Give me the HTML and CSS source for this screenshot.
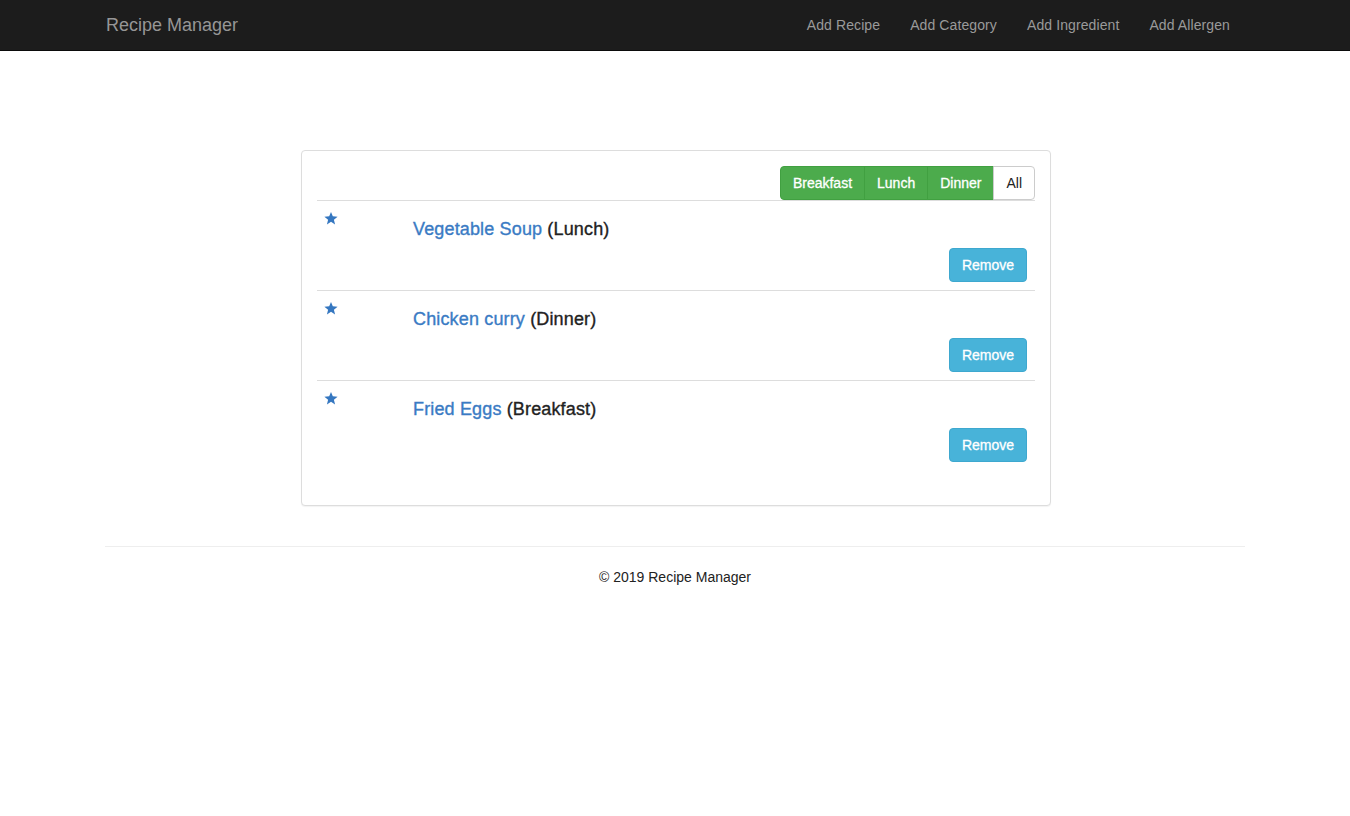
FILE: index.html
```html
<!DOCTYPE html>
<html lang="en">
<head>
<meta charset="utf-8">
<title>Recipe Manager</title>
<link rel="stylesheet" href="styles.css">
</head>
<body>
<nav class="navbar">
  <div class="container nav-inner">
    <a class="brand" href="#">Recipe Manager</a>
    <ul class="nav-links">
      <li><a href="#">Add Recipe</a></li>
      <li><a href="#">Add Category</a></li>
      <li><a href="#">Add Ingredient</a></li>
      <li><a href="#">Add Allergen</a></li>
    </ul>
  </div>
</nav>

<main class="main">
  <div class="panel">
    <div class="panel-body">
      <div class="filter-bar">
        <div class="btn-group">
          <button class="btn btn-success">Breakfast</button>
          <button class="btn btn-success">Lunch</button>
          <button class="btn btn-success">Dinner</button>
          <button class="btn btn-default">All</button>
        </div>
      </div>
      <ul class="recipe-list">
        <li class="recipe">
          <div class="star-col">
            <svg class="star" viewBox="0 0 24 24" width="14" height="14"><path d="M12 1.5l3.1 7.6 8.2.6-6.3 5.3 2 8-7-4.4-7 4.4 2-8L.7 9.7l8.2-.6z" fill="currentColor"/></svg>
          </div>
          <div class="recipe-body">
            <h4 class="recipe-title"><a href="#">Vegetable Soup</a> (Lunch)</h4>
            <div class="recipe-actions"><button class="btn btn-info">Remove</button></div>
          </div>
        </li>
        <li class="recipe">
          <div class="star-col">
            <svg class="star" viewBox="0 0 24 24" width="14" height="14"><path d="M12 1.5l3.1 7.6 8.2.6-6.3 5.3 2 8-7-4.4-7 4.4 2-8L.7 9.7l8.2-.6z" fill="currentColor"/></svg>
          </div>
          <div class="recipe-body">
            <h4 class="recipe-title"><a href="#">Chicken curry</a> (Dinner)</h4>
            <div class="recipe-actions"><button class="btn btn-info">Remove</button></div>
          </div>
        </li>
        <li class="recipe">
          <div class="star-col">
            <svg class="star" viewBox="0 0 24 24" width="14" height="14"><path d="M12 1.5l3.1 7.6 8.2.6-6.3 5.3 2 8-7-4.4-7 4.4 2-8L.7 9.7l8.2-.6z" fill="currentColor"/></svg>
          </div>
          <div class="recipe-body">
            <h4 class="recipe-title"><a href="#">Fried Eggs</a> (Breakfast)</h4>
            <div class="recipe-actions"><button class="btn btn-info">Remove</button></div>
          </div>
        </li>
      </ul>
    </div>
  </div>
</main>

<footer class="container footer">
  <hr class="footer-rule">
  <p class="copyright">© 2019 Recipe Manager</p>
</footer>
</body>
</html>
```

FILE: styles.css
```css
* { box-sizing: border-box; }

html, body {
  margin: 0;
  padding: 0;
}

body {
  font-family: "Liberation Sans", Arial, Helvetica, sans-serif;
  font-size: 14px;
  line-height: 1.42857;
  color: #222;
  background: #fff;
}

a { text-decoration: none; }

.container {
  width: 1170px;
  margin: 0 auto;
  padding: 0 15px;
}

/* Navbar */
.navbar {
  background: #1c1c1c;
  height: 51px;
  border-bottom: 1px solid #0b0b0b;
}

.nav-inner {
  display: flex;
  justify-content: space-between;
  align-items: center;
  height: 50px;
}

.brand {
  font-size: 18px;
  line-height: 20px;
  color: #969696;
  margin-left: 1px;
}

.nav-links {
  list-style: none;
  display: flex;
  margin: 0;
  padding: 0;
}

.nav-links li a {
  display: block;
  padding: 15px 15px;
  line-height: 20px;
  color: #9a9a9a;
  font-size: 14px;
  letter-spacing: 0.1px;
}

/* Main */
.main {
  display: flex;
  justify-content: center;
  padding-top: 99px;
  padding-left: 2px;
}

.panel {
  width: 750px;
  border: 1px solid #ddd;
  border-radius: 4px;
  background: #fff;
  box-shadow: 0 1px 1px rgba(0, 0, 0, 0.05);
  margin-bottom: 20px;
}

.panel-body {
  padding: 15px;
}

.filter-bar {
  display: flex;
  justify-content: flex-end;
}

.btn-group {
  display: flex;
}

.btn {
  font-family: inherit;
  font-size: 14px;
  line-height: 20px;
  padding: 6px 12px;
  border: 1px solid transparent;
  border-radius: 4px;
  cursor: pointer;
  height: 34px;
}

.btn-group .btn {
  border-radius: 0;
}
.btn-group .btn + .btn {
  margin-left: -1px;
}
.btn-group .btn:first-child {
  border-radius: 4px 0 0 4px;
}
.btn-group .btn:last-child {
  border-radius: 0 4px 4px 0;
}

.btn-success {
  background: #4cab4c;
  border-color: #41a041;
  color: #fff;
  -webkit-text-stroke: 0.3px #fff;
}

.btn-default {
  background: #fff;
  border-color: #ccc;
  color: #222;
  position: relative;
}

.btn-info {
  background: #48b3d9;
  border-color: #3ea8cf;
  color: #fff;
  width: 78px;
  padding: 6px 0;
  -webkit-text-stroke: 0.3px #fff;
}

/* Recipes */
.recipe-list {
  list-style: none;
  margin: 0 0 20px;
  padding: 0;
}

.recipe {
  display: flex;
  border-top: 1px solid #ddd;
  height: 90px;
  padding: 0 8px 8px 7px;
}

.star-col {
  width: 89px;
  flex: none;
  padding-top: 10px;
}

.star {
  display: block;
  color: #3577c0;
}

.recipe-body {
  flex: 1;
  display: flex;
  flex-direction: column;
}

.recipe-title {
  margin: 18px 0 0;
  font-size: 18px;
  font-weight: 500;
  line-height: 20px;
  color: #222;
  letter-spacing: 0.15px;
  -webkit-text-stroke: 0.35px #222;
}

.recipe-title a {
  color: #3a7bc4;
  -webkit-text-stroke: 0.35px #3a7bc4;
}

.recipe-actions {
  display: flex;
  justify-content: flex-end;
  margin-top: 9px;
}

/* Footer */
.footer-rule {
  border: 0;
  border-top: 1px solid #eee;
  margin: 20px 0 21px;
}

.copyright {
  margin: 0 0 10px;
  text-align: center;
  color: #222;
}
```
